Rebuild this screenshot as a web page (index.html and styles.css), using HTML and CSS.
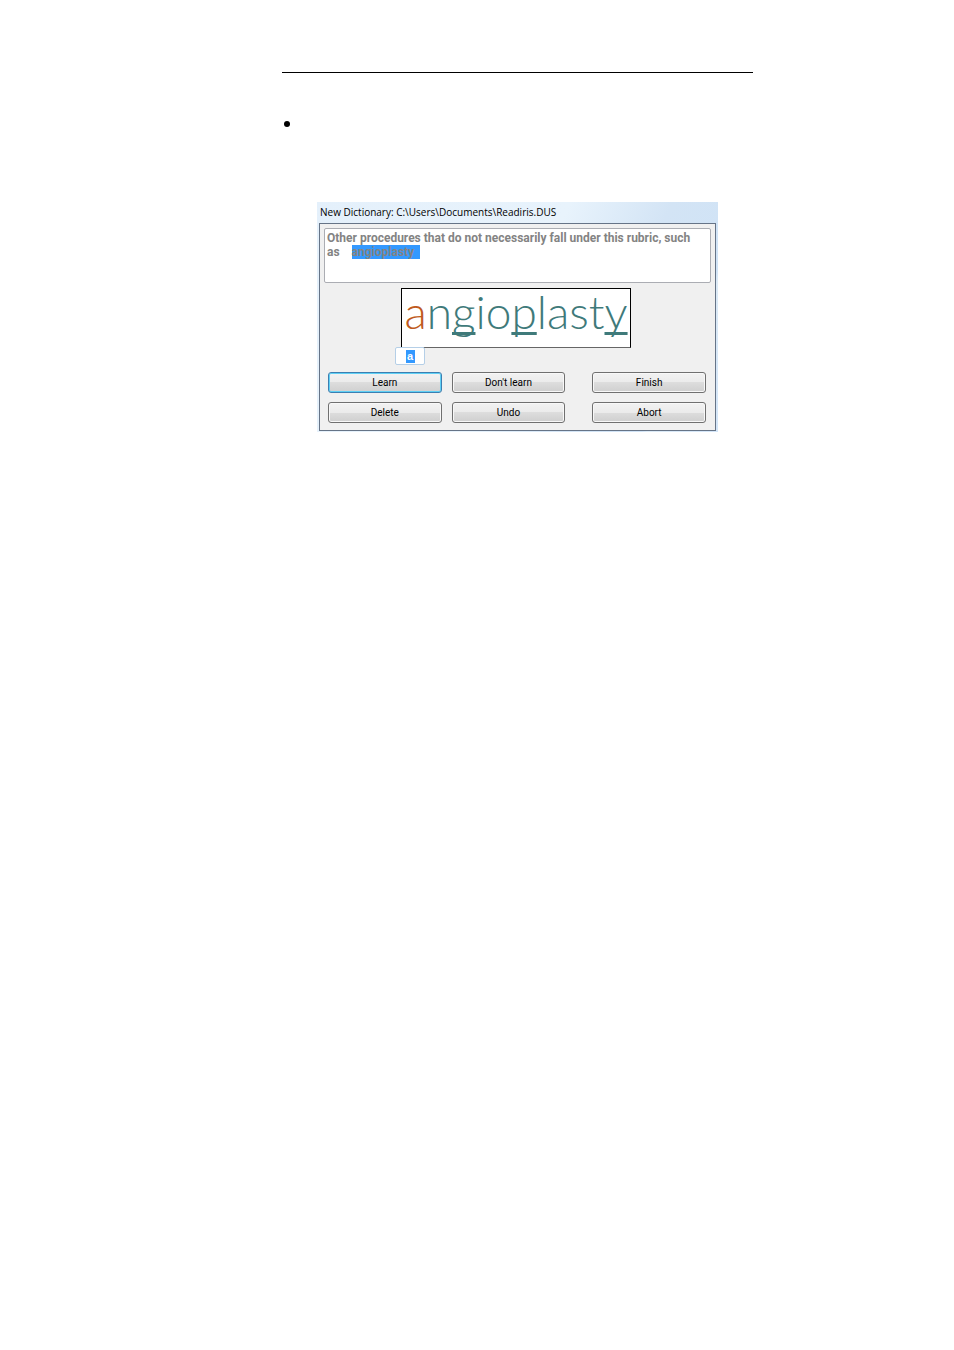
FILE: index.html
```html
<!DOCTYPE html>
<html lang="en">
<head>
  <meta charset="UTF-8" />
  <title>New Dictionary</title>
  <meta name="viewport" content="width=device-width, initial-scale=1.0" />
  <link rel="stylesheet" href="styles.css">
</head>
<body>

  <main class="page">
    <hr class="rule" />
    <ul class="notes">
      <li></li>
    </ul>

    <!-- Font learning dialog -->
    <section class="dialog">
      <h1 class="title">New Dictionary: C:\Users\Documents\Readiris.DUS</h1>
      <form class="panel">
        <p class="context">Other procedures that do not necessarily fall under this rubric, such<br />as <mark>angioplasty</mark></p>

        <div class="sample">
          <p class="word"><span class="current">a</span>n<u>g</u>io<u>p</u>last<u>y</u></p>
          <input class="letter" type="text" value="a" aria-label="Recognized character" />
        </div>

        <div class="buttons">
          <button type="button" class="default">Learn</button>
          <button type="button">Don't learn</button>
          <button type="button">Finish</button>
          <button type="button">Delete</button>
          <button type="button">Undo</button>
          <button type="button">Abort</button>
        </div>
      </form>
    </section>
  </main>

</body>
</html>
```
FILE: styles.css
```css
* {
  box-sizing: border-box;
}
body {
  margin: 0;
  background: #fff;
  color: #000;
  font-family: "Liberation Sans", Arial, sans-serif;
}
.page {
  max-width: 753px;
  padding: 72px 0 0 282px;
}
.rule {
  height: 1px;
  margin: 0;
  border: none;
  background: #000;
}
.notes {
  list-style: none;
  margin: 48px 0 0;
  padding: 0 2px;
}
.notes li {
  height: 46px;
}
.notes li::before {
  content: "";
  display: block;
  width: 6px;
  height: 6px;
  border-radius: 50%;
  background: #000;
}

/* Dialog window */
.dialog {
  margin: 35px 35px 0;
  padding: 0 2px 1px;
  background: linear-gradient(115deg, #e4f0fb 0%, #e8f3fc 50%, #d3e4f5 70%, #d0e3f6 85%, #dceaf6 86%, #d3e5f8 100%);
}
.title {
  height: 21px;
  margin: 0;
  padding-left: 1px;
  font: 10px/20px "Open Sans", sans-serif;
  white-space: nowrap;
}
.panel {
  padding: 4px;
  border: 1px solid #667487;
  background: #f0f0f0;
}
.context {
  height: 55px;
  margin: 0;
  padding: 2px;
  border: 1px solid #abadb3;
  border-radius: 2px;
  background: #fff;
  color: #838383;
  font: bold 12px/14px Roboto, sans-serif;
  white-space: nowrap;
}
.context mark {
  margin-left: 9px;
  padding-right: 6px;
  background: #3399ff;
  color: #838383;
}

/* Scanned word */
.sample {
  position: relative;
  width: 230px;
  margin: 5px 0 0 77px;
}
.word {
  height: 60px;
  margin: 0;
  border: 1px solid #000;
  border-bottom-color: #666;
  background: #fff;
  color: #3f7a7a;
  font: 300 46px/46px Lato, sans-serif;
  text-align: center;
  white-space: nowrap;
}
.word .current {
  color: #bf5a20;
}
.word u {
  text-decoration-thickness: 3px;
  text-decoration-skip-ink: none;
  text-underline-offset: 3px;
}
.letter {
  position: absolute;
  left: -6px;
  top: 59px;
  width: 30px;
  height: 18px;
  padding: 0;
  border: 1px solid #b5cfe7;
  border-radius: 2px;
  background: linear-gradient(#3399ff, #3399ff) center / 9px 13px no-repeat #fff;
  color: #fff;
  font: bold 11px/14px "Liberation Sans", Arial, sans-serif;
  text-align: center;
}

/* Actions */
.buttons {
  display: grid;
  grid-template-columns: 1fr 1fr 7px 1fr;
  gap: 9px 10px;
  padding: 24px 5px 3px 4px;
}
.buttons button {
  height: 21px;
  padding: 0;
  border: 1px solid #707070;
  border-radius: 3px;
  background: linear-gradient(#f2f2f2 0%, #ebebeb 50%, #dddddd 50%, #cfcfcf 100%);
  box-shadow: inset 0 0 0 1px #f8f8f8;
  color: #000;
  font: 10px/18px Roboto, sans-serif;
}
.buttons button:nth-child(3n) {
  grid-column: 4;
}
.buttons .default {
  border-color: #3c7fb1;
  box-shadow: inset 0 0 0 1px #5fd0f5;
}
```
